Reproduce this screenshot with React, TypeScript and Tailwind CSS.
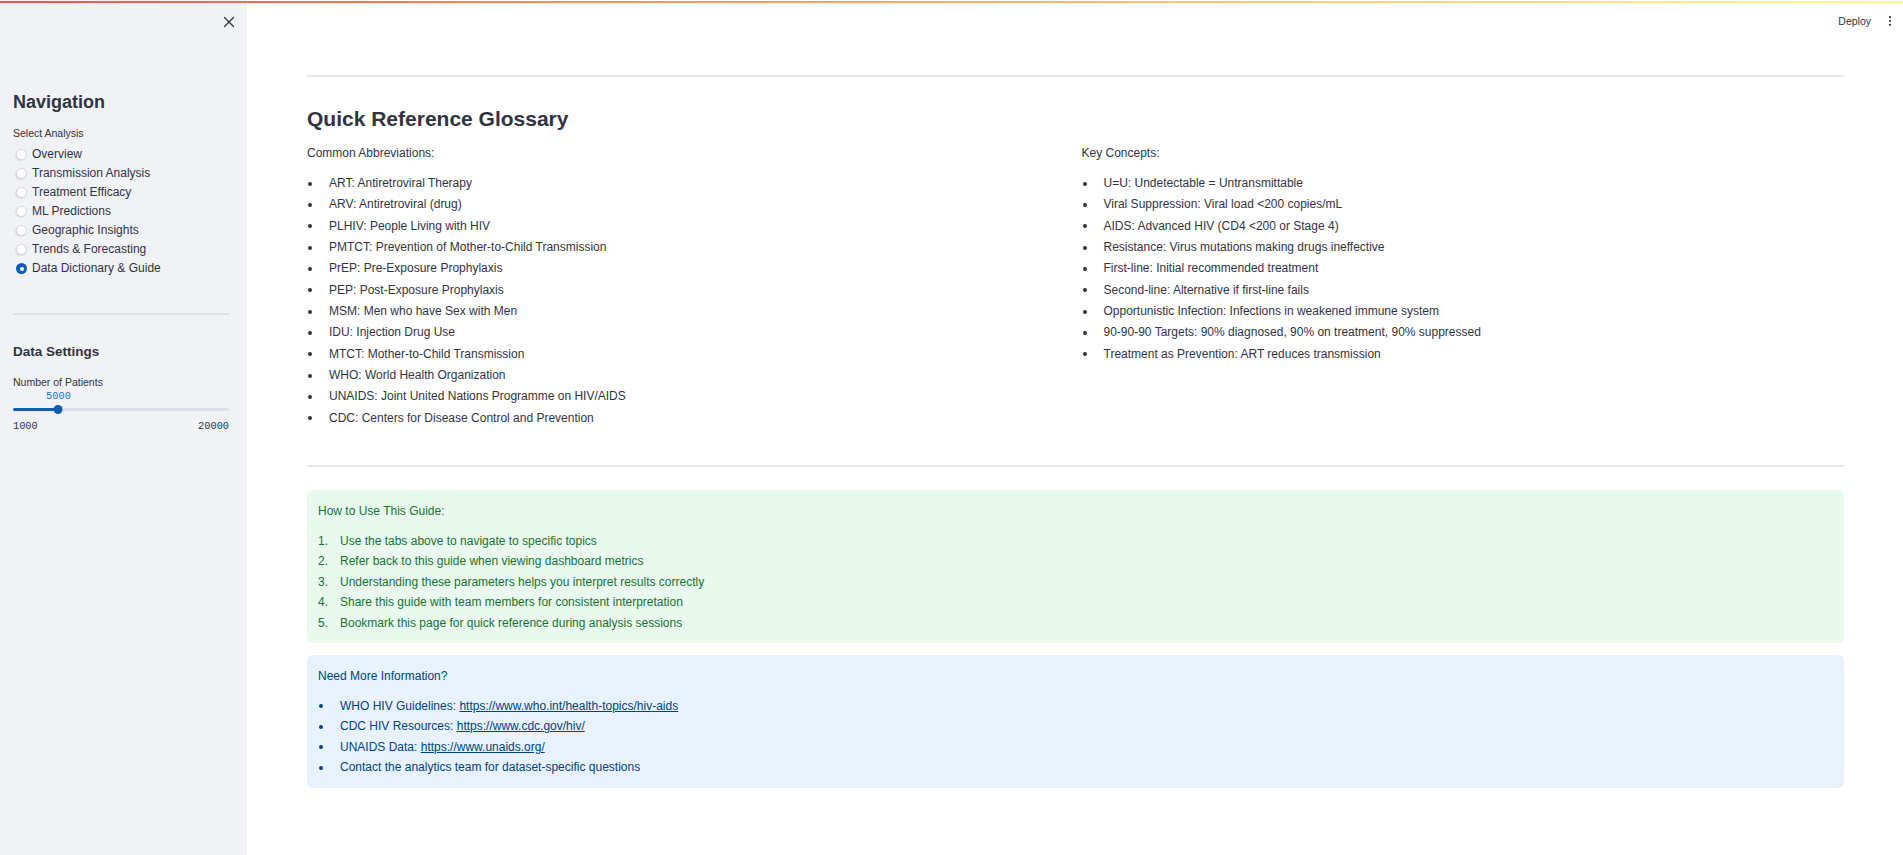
import React from "react";
import { X } from "lucide-react";

const abbreviations = [
  "ART: Antiretroviral Therapy",
  "ARV: Antiretroviral (drug)",
  "PLHIV: People Living with HIV",
  "PMTCT: Prevention of Mother-to-Child Transmission",
  "PrEP: Pre-Exposure Prophylaxis",
  "PEP: Post-Exposure Prophylaxis",
  "MSM: Men who have Sex with Men",
  "IDU: Injection Drug Use",
  "MTCT: Mother-to-Child Transmission",
  "WHO: World Health Organization",
  "UNAIDS: Joint United Nations Programme on HIV/AIDS",
  "CDC: Centers for Disease Control and Prevention",
];

const concepts = [
  "U=U: Undetectable = Untransmittable",
  "Viral Suppression: Viral load <200 copies/mL",
  "AIDS: Advanced HIV (CD4 <200 or Stage 4)",
  "Resistance: Virus mutations making drugs ineffective",
  "First-line: Initial recommended treatment",
  "Second-line: Alternative if first-line fails",
  "Opportunistic Infection: Infections in weakened immune system",
  "90-90-90 Targets: 90% diagnosed, 90% on treatment, 90% suppressed",
  "Treatment as Prevention: ART reduces transmission",
];

const guide = [
  "Use the tabs above to navigate to specific topics",
  "Refer back to this guide when viewing dashboard metrics",
  "Understanding these parameters helps you interpret results correctly",
  "Share this guide with team members for consistent interpretation",
  "Bookmark this page for quick reference during analysis sessions",
];

const navItems = [
  "Overview",
  "Transmission Analysis",
  "Treatment Efficacy",
  "ML Predictions",
  "Geographic Insights",
  "Trends & Forecasting",
  "Data Dictionary & Guide",
];

function BulletItem({ children, lh }: { children: React.ReactNode; lh: string }) {
  return (
    <li className={`flex items-center ${lh}`}>
      <span className="w-[22px] shrink-0 flex items-center">
        <span className="ml-[1px] w-[4px] h-[4px] rounded-full bg-current" />
      </span>
      <span>{children}</span>
    </li>
  );
}

export default function App() {
  const min = 1000;
  const max = 20000;
  const value = 5000;
  const pct = `${((value - min) / (max - min)) * 100}%`;

  return (
    <div className="relative flex h-screen w-full overflow-hidden bg-white text-[#31333f] font-['Liberation_Sans',Arial,Helvetica,sans-serif]">
      <div className="absolute top-[1px] left-0 right-0 h-[2px] bg-linear-to-r from-[#ff4b4b] to-[#fffd80]" />

      {/* Sidebar */}
      <aside className="w-[247px] shrink-0 h-full bg-[#f0f2f6] pl-[13px] pr-[18px] flex flex-col">
        <div className="h-[43px] flex items-center justify-end -mr-[9px]">
          <X size={18} strokeWidth={1.6} className="text-[#31333f]" />
        </div>
        <h2 className="mt-[47px] text-[18px] leading-[24px] font-bold">Navigation</h2>
        <div className="mt-[12px] text-[10.5px] leading-[14px]">Select Analysis</div>
        <div className="mt-[5px] flex flex-col">
          {navItems.map((item, i) => {
            const checked = i === navItems.length - 1;
            return (
              <div key={item} className="h-[19px] flex items-center">
                {checked ? (
                  <span className="ml-[3px] w-[11px] h-[11px] rounded-full bg-[#0d5cb6] flex items-center justify-center">
                    <span className="w-[4px] h-[4px] rounded-full bg-white" />
                  </span>
                ) : (
                  <span className="ml-[3px] w-[11px] h-[11px] rounded-full bg-white border border-[#d3d6dd] shadow-[-1px_1px_1px_rgba(0,0,0,0.08)]" />
                )}
                <span className="ml-[5px] text-[12px] leading-[19px]">{item}</span>
              </div>
            );
          })}
        </div>
        <div className="mt-[35px] h-[2px] bg-[#dcdfe6]" />
        <h3 className="mt-[28px] text-[13.5px] leading-[18px] font-bold">Data Settings</h3>
        <div className="mt-[14px] text-[10.5px] leading-[14px]">Number of Patients</div>
        <div className="mt-[1px] relative h-[12px]">
          <span
            className="absolute top-0 -translate-x-1/2 font-['Liberation_Mono',monospace] text-[10.3px] leading-[12px] text-[#1f6fcf]"
            style={{ left: pct }}
          >
            {value}
          </span>
        </div>
        <div className="mt-[2px] relative h-[10px] flex items-center">
          <div className="h-[3px] w-full rounded-full bg-[#dde1ea]" />
          <div className="absolute left-0 h-[3px] rounded-full bg-[#0d5cb6]" style={{ width: pct }} />
          <div
            className="absolute w-[9px] h-[9px] rounded-full bg-[#0d5cb6] -translate-x-1/2"
            style={{ left: pct }}
          />
        </div>
        <div className="mt-[6px] flex justify-between font-['Liberation_Mono',monospace] text-[10.3px] leading-[12px]">
          <span>{min}</span>
          <span>{max}</span>
        </div>
      </aside>

      {/* Main */}
      <main className="flex-1 h-full flex flex-col min-w-0">
        <div className="h-[41px] shrink-0 flex items-center justify-end pr-[11px]">
          <span className="text-[10.5px] leading-[14px]">Deploy</span>
          <svg width="4" height="14" viewBox="0 0 4 14" className="ml-[17px]" fill="#31333f">
            <circle cx="2" cy="3.2" r="1.1" />
            <circle cx="2" cy="7" r="1.1" />
            <circle cx="2" cy="10.8" r="1.1" />
          </svg>
        </div>

        <div className="px-[59px] pl-[60px] flex flex-col">
          <div className="mt-[34px] h-[2px] bg-[#e8e8ea]" />
          <h1 className="mt-[28px] text-[21px] leading-[28px] font-bold">Quick Reference Glossary</h1>

          <div className="mt-[10px] grid grid-cols-2 gap-x-[12px] text-[12px]">
            <div>
              <div className="leading-[20px]">Common Abbreviations:</div>
              <ul className="mt-[10px]">
                {abbreviations.map((t) => (
                  <BulletItem key={t} lh="h-[21.33px] leading-[21.33px]">
                    {t}
                  </BulletItem>
                ))}
              </ul>
            </div>
            <div>
              <div className="leading-[20px]">Key Concepts:</div>
              <ul className="mt-[10px]">
                {concepts.map((t) => (
                  <BulletItem key={t} lh="h-[21.33px] leading-[21.33px]">
                    {t}
                  </BulletItem>
                ))}
              </ul>
            </div>
          </div>

          <div className="mt-[36px] h-[2px] bg-[#e8e8ea]" />

          <div className="mt-[23px] rounded-[6px] bg-[#e9f9ee] text-[#177233] text-[12px] pl-[11px] pr-[12px] pt-[11px] pb-[10px]">
            <div className="leading-[20px]">How to Use This Guide:</div>
            <ol className="mt-[10px]">
              {guide.map((t, i) => (
                <li key={t} className="flex items-center h-[20.4px] leading-[20.4px]">
                  <span className="w-[22px] shrink-0">{i + 1}.</span>
                  <span>{t}</span>
                </li>
              ))}
            </ol>
          </div>

          <div className="mt-[12px] rounded-[6px] bg-[#e8f2fc] text-[#004280] text-[12px] pl-[11px] pr-[12px] pt-[11px] pb-[10px]">
            <div className="leading-[20px]">Need More Information?</div>
            <ul className="mt-[10px]">
              <BulletItem lh="h-[20.5px] leading-[20.5px]">
                WHO HIV Guidelines:{" "}
                <a className="underline" href="#">
                  https://www.who.int/health-topics/hiv-aids
                </a>
              </BulletItem>
              <BulletItem lh="h-[20.5px] leading-[20.5px]">
                CDC HIV Resources:{" "}
                <a className="underline" href="#">
                  https://www.cdc.gov/hiv/
                </a>
              </BulletItem>
              <BulletItem lh="h-[20.5px] leading-[20.5px]">
                UNAIDS Data:{" "}
                <a className="underline" href="#">
                  https://www.unaids.org/
                </a>
              </BulletItem>
              <BulletItem lh="h-[20.5px] leading-[20.5px]">
                Contact the analytics team for dataset-specific questions
              </BulletItem>
            </ul>
          </div>
        </div>
      </main>
    </div>
  );
}
